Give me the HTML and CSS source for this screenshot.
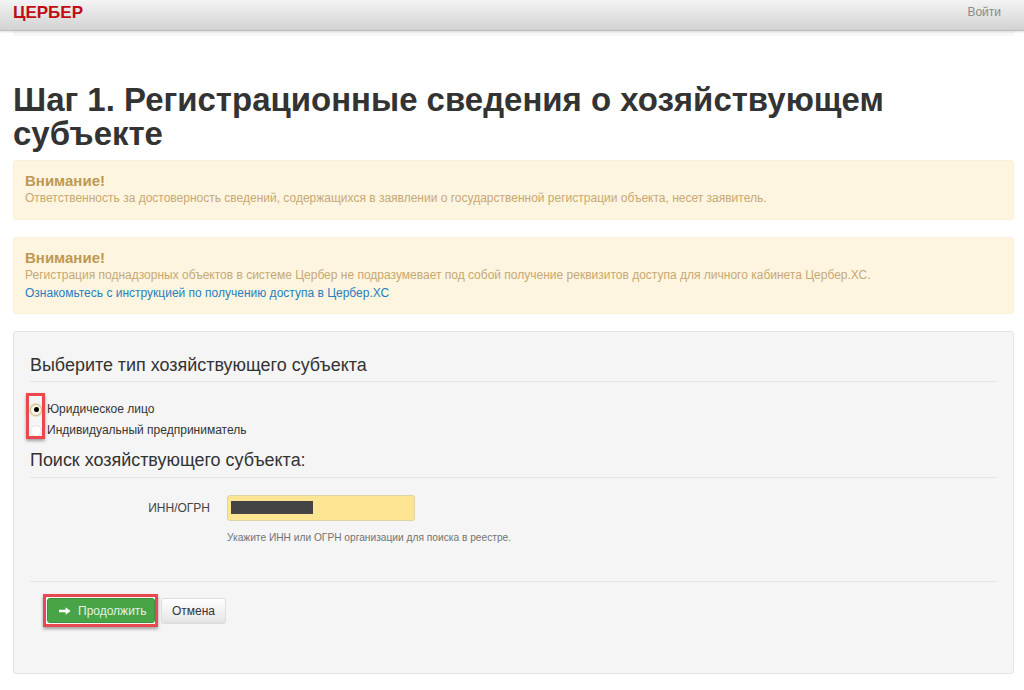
FILE: index.html
```html
<!DOCTYPE html>
<html lang="ru">
<head>
<meta charset="utf-8">
<title>Цербер</title>
<link rel="stylesheet" href="styles.css">
</head>
<body>
<header class="navbar">
  <span class="brand">ЦЕРБЕР</span>
  <a class="login" href="#">Войти</a>
</header>
<main class="page">
  <div class="strip"></div>
  <h1 class="title">Шаг 1. Регистрационные сведения о хозяйствующем субъекте</h1>
  <div class="alert alert-first">
    <strong class="alert-head">Внимание!</strong>
    <p class="alert-line">Ответственность за достоверность сведений, содержащихся в заявлении о государственной регистрации объекта, несет заявитель.</p>
  </div>
  <div class="alert alert-second">
    <strong class="alert-head">Внимание!</strong>
    <p class="alert-line">Регистрация поднадзорных объектов в системе Цербер не подразумевает под собой получение реквизитов доступа для личного кабинета Цербер.ХС.</p>
    <p class="alert-line"><a class="alert-link" href="#">Ознакомьтесь с инструкцией по получению доступа в Цербер.ХС</a></p>
  </div>
  <form class="well">
    <h2 class="legend">Выберите тип хозяйствующего субъекта</h2>
    <div class="radios">
      <label class="radio"><span class="dot dot-on"></span>Юридическое лицо</label>
      <label class="radio"><span class="dot"></span>Индивидуальный предприниматель</label>
      <span class="mark mark-radios"></span>
    </div>
    <h2 class="legend legend-search">Поиск хозяйствующего субъекта:</h2>
    <div class="field">
      <span class="field-label">ИНН/ОГРН</span>
      <div class="field-body">
        <div class="input"><span class="redact"></span></div>
        <p class="help">Укажите ИНН или ОГРН организации для поиска в реестре.</p>
      </div>
    </div>
    <div class="actions">
      <button type="button" class="btn btn-go">
        <svg class="arrow" width="12" height="10" viewBox="0 0 12 10"><path d="M0 3.8h6.6V1.2L11.6 5 6.6 8.8V6.2H0z" fill="#fff"/></svg>Продолжить
        <span class="mark mark-btn"></span>
      </button>
      <button type="button" class="btn btn-cancel">Отмена</button>
    </div>
  </form>
</main>
</body>
</html>
```

FILE: styles.css
```css
* { box-sizing: border-box; }
html, body { margin: 0; padding: 0; }
body {
  background: #fff;
  color: #333;
  font-family: "Liberation Sans", Arial, sans-serif;
  font-size: 12px;
  line-height: 17px;
  height: 690px;
  overflow: hidden;
}
.navbar {
  height: 31px;
  display: flex;
  justify-content: space-between;
  align-items: flex-start;
  padding: 0 23px 0 13px;
  background: linear-gradient(to bottom, #f4f4f4 0%, #d2d2d2 100%);
  border-bottom: 1px solid #bdbdbd;
  box-shadow: 0 1px 2px rgba(0,0,0,.12);
  position: relative;
}
.brand {
  color: #c00d12;
  font-size: 17px;
  font-weight: 700;
  line-height: 25px;
}
.login {
  color: #8a8a8a;
  font-size: 12px;
  line-height: 25px;
  text-decoration: none;
}
.page { padding: 0 10px 0 13px; }
.strip {
  height: 5px;
  background: #f7f7f7;
  margin-bottom: 47px;
}
.title {
  margin: 0 0 9px;
  font-size: 32.97px;
  line-height: 34px;
  font-weight: 700;
  color: #333;
}
.alert {
  background: #fdf5df;
  border: 1px solid #faf0d8;
  border-radius: 3px;
  padding: 12px 11px;
  margin-bottom: 17px;
  color: #c8a874;
}
.alert-first { height: 60px; }
.alert-second { padding-bottom: 11px; }
.alert-head {
  display: block;
  font-size: 15px;
  line-height: 16px;
  color: #c09853;
}
.alert-line { margin: 0; line-height: 18px; }
.alert-link { color: #1f7fbf; text-decoration: none; }
.well {
  height: 343px;
  background: #f5f5f5;
  border: 1px solid #e3e3e3;
  border-radius: 3px;
  padding: 0 16px;
}
.legend {
  margin: 21px 0 0;
  padding-bottom: 4px;
  font-size: 17.95px;
  font-weight: 400;
  line-height: 24px;
  color: #333;
  border-bottom: 1px solid #e5e5e5;
}
.radios {
  position: relative;
  margin-top: 17px;
  margin-left: -16px;
  padding-left: 16px;
}
.radio {
  display: flex;
  align-items: center;
  height: 21px;
  color: #333;
}
.dot {
  flex: none;
  width: 12px;
  height: 12px;
  margin-right: 5px;
  border-radius: 50%;
  background: #fff;
  border: 1px solid #e2e2e2;
  position: relative;
}
.dot-on {
  border-color: #c9b98f;
  background: #fdf8e8;
  box-shadow: 0 0 1px 1px #e9dfc0;
}
.dot-on::after {
  content: "";
  position: absolute;
  left: 2.5px;
  top: 2.5px;
  width: 5px;
  height: 5px;
  border-radius: 50%;
  background: #000;
}
.mark {
  position: absolute;
  border: 3px solid #e9484f;
  box-shadow: 0 2px 3px rgba(0,0,0,.35);
  pointer-events: none;
}
.mark-radios {
  left: 12px;
  top: -6px;
  width: 19px;
  height: 46px;
}
.legend-search {
  margin-top: 7px;
  padding-bottom: 5px;
}
.field {
  display: flex;
  margin-top: 17px;
}
.field-label {
  width: 197px;
  padding-right: 17px;
  text-align: right;
  line-height: 27px;
  color: #444;
}
.field-body { width: 320px; }
.input {
  width: 188px;
  height: 26px;
  background: #fee594;
  border: 1px solid #dcd3a6;
  border-radius: 3px;
  padding: 5px 3px;
}
.redact {
  display: block;
  width: 82px;
  height: 13px;
  background: #444;
}
.help {
  margin: 10px 0 0;
  font-size: 10.2px;
  line-height: 14px;
  color: #737373;
}
.actions {
  display: flex;
  align-items: center;
  gap: 6px;
  margin-top: 36px;
  padding: 16px 0 0 17px;
  border-top: 1px solid #e5e5e5;
}
.btn {
  font-family: inherit;
  font-size: 12px;
  height: 25px;
  border-radius: 3px;
  padding: 0;
  cursor: pointer;
}
.btn-go {
  position: relative;
  width: 108px;
  color: #e4f3e4;
  background: #47a447;
  border: 1px solid #3e8f3e;
  display: flex;
  align-items: center;
  justify-content: flex-start;
  padding-left: 11px;
}
.arrow { margin-right: 7px; }
.mark-btn {
  left: -5px;
  top: -5px;
  right: -4px;
  bottom: -5px;
}
.btn-cancel {
  width: 65px;
  color: #333;
  background: linear-gradient(to bottom, #fff, #e6e6e6);
  border: 1px solid #ddd;
  box-shadow: 0 1px 1px rgba(0,0,0,.1);
}
```
